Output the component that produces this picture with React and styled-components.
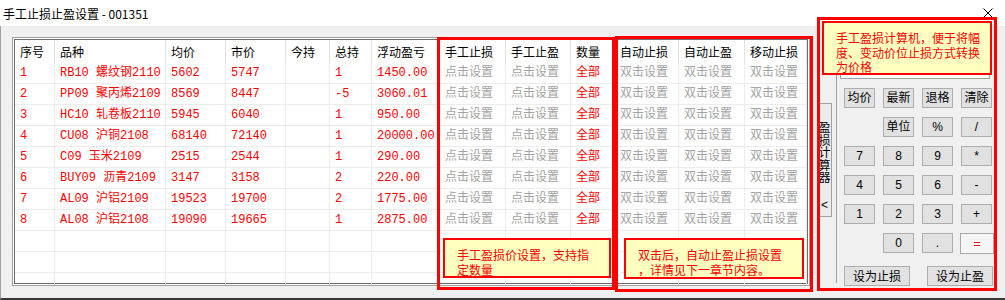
import React from 'react';
import styled, { createGlobalStyle } from 'styled-components';

const RED = '#ff0000';

const GlobalStyle = createGlobalStyle`
  html, body {
    margin: 0;
    padding: 0;
    background: #fff;
  }
  body {
    font-family: "Noto Sans CJK SC", "Noto Sans", sans-serif;
  }
`;

const columns = [
  { title: '序号', w: 40 },
  { title: '品种', w: 111 },
  { title: '均价', w: 60 },
  { title: '市价', w: 60 },
  { title: '今持', w: 44 },
  { title: '总持', w: 42 },
  { title: '浮动盈亏', w: 68 },
  { title: '手工止损', w: 66 },
  { title: '手工止盈', w: 65 },
  { title: '数量', w: 44 },
  { title: '自动止损', w: 64 },
  { title: '自动止盈', w: 66 },
  { title: '移动止损', w: 62 },
];

const positions = [
  ['1', 'RB10 螺纹钢2110', '5602', '5747', '', '1', '1450.00'],
  ['2', 'PP09 聚丙烯2109', '8569', '8447', '', '-5', '3060.01'],
  ['3', 'HC10 轧卷板2110', '5945', '6040', '', '1', '950.00'],
  ['4', 'CU08 沪铜2108', '68140', '72140', '', '1', '20000.00'],
  ['5', 'C09 玉米2109', '2515', '2544', '', '1', '290.00'],
  ['6', 'BUY09 沥青2109', '3147', '3158', '', '2', '220.00'],
  ['7', 'AL09 沪铝2109', '19523', '19700', '', '2', '1775.00'],
  ['8', 'AL08 沪铝2108', '19090', '19665', '', '1', '2875.00'],
];

const keys = [
  { label: '均价', col: 1 }, { label: '最新' }, { label: '退格' }, { label: '清除' },
  { label: '单位', col: 2 }, { label: '%' }, { label: '/' },
  { label: '7', col: 1 }, { label: '8' }, { label: '9' }, { label: '*' },
  { label: '4', col: 1 }, { label: '5' }, { label: '6' }, { label: '-' },
  { label: '1', col: 1 }, { label: '2' }, { label: '3' }, { label: '+' },
  { label: '0', col: 2 }, { label: '.' }, { label: '=', accent: true },
];

const template = columns.map((c) => c.w + 'px').join(' ');

const Window = styled.div`
  position: relative;
  width: 1005px;
  height: 300px;
  overflow: hidden;
  display: flex;
  flex-direction: column;
  background: #f0f0f0;
  font-family: "Noto Sans CJK SC", "Noto Sans", sans-serif;
`;

const TitleBar = styled.div`
  flex: none;
  height: 26px;
  display: flex;
  align-items: center;
  padding: 0 12px 0 3px;
  background: #fff;
  font-size: 12px;
  color: #000;
`;

const CloseIcon = styled.svg`
  margin-left: auto;
  display: block;
`;

const Body = styled.div`
  flex: 1;
  display: flex;
  align-items: flex-start;
  border-left: 1px solid #a0a0a0;
  border-bottom: 2px solid #3a3a3a;
  background: #f0f0f0;
`;

const GridFrame = styled.div`
  flex: none;
  margin: 11px 0 0 11px;
  width: 798px;
  height: 249px;
  box-sizing: border-box;
  padding: 2px;
  border: 1px solid #a0a0a0;
  box-shadow: inset 0 0 0 1px #fff, inset 0 0 0 2px #6d6d6d;
  background: #fff;
  overflow: hidden;
`;

const GridRow = styled.div`
  display: grid;
  grid-template-columns: ${template};
  height: ${(p) => (p.$head ? 23 : 21)}px;
`;

const HeadCell = styled.div`
  box-sizing: border-box;
  padding-left: 5px;
  border-right: 1px solid #e2e2e2;
  line-height: 23px;
  font-size: 12px;
  color: #000;
  white-space: nowrap;
  overflow: hidden;
`;

const toneColor = { red: RED, gray: '#a3a3a3', black: '#000' };

const Cell = styled.div`
  box-sizing: border-box;
  padding-left: 5px;
  border-right: 1px solid #ececec;
  border-bottom: 1px solid #ececec;
  line-height: 21px;
  font-family: "Liberation Mono", "Noto Sans CJK SC", monospace;
  font-size: 12px;
  color: ${(p) => toneColor[p.$tone] || '#000'};
  white-space: nowrap;
  overflow: hidden;
`;

const CalcPanel = styled.div`
  flex: none;
  margin-left: 7px;
  display: flex;
  align-items: flex-start;
`;

const SideTab = styled.div`
  margin-top: 77px;
  width: 15px;
  height: 114px;
  box-sizing: border-box;
  border: 1px solid #a0a0a0;
  background: #ebebeb;
  display: flex;
  flex-direction: column;
  align-items: center;
  padding-top: 17px;
  font-size: 12px;
  color: #000;
`;

const TabChar = styled.span`
  display: block;
  width: 12px;
  line-height: 12.5px;
  text-align: center;
`;

const TabArrow = styled.span`
  display: block;
  margin-top: 15px;
  font-family: "Liberation Sans", sans-serif;
  line-height: 12px;
`;

const Divider = styled.div`
  margin-left: 4px;
  width: 1px;
  height: 257px;
  background: #a0a0a0;
`;

const KeyPad = styled.div`
  margin-left: 3px;
  width: 154px;
  display: flex;
  flex-direction: column;
`;

const Display = styled.div`
  margin-top: 30px;
  width: 150px;
  height: 23px;
  box-sizing: border-box;
  border: 1px solid #a0a0a0;
  background: #fff;
`;

const KeyGrid = styled.div`
  margin: 9px 0 0 4px;
  display: grid;
  grid-template-columns: repeat(4, 31px);
  grid-auto-rows: 20px;
  column-gap: 8px;
  row-gap: 9px;
`;

const Key = styled.button`
  grid-column-start: ${(p) => p.$col || 'auto'};
  box-sizing: border-box;
  margin: ${(p) => (p.$accent ? '0 -2px 0 -1px' : '0')};
  height: ${(p) => (p.$accent ? 21 : 20)}px;
  padding: 0;
  border: 1px solid ${(p) => (p.$accent ? '#a8a8a8' : '#adadad')};
  background: ${(p) => (p.$accent ? '#f5f5f5' : '#e1e1e1')};
  color: ${(p) => (p.$accent ? RED : '#000')};
  font-family: "Liberation Sans", "Noto Sans CJK SC", sans-serif;
  font-size: 12px;
  line-height: 18px;
`;

const ActionRow = styled.div`
  margin: 13px 0 0 4px;
  display: flex;
  gap: 17px;
`;

const ActionButton = styled.button`
  width: 66px;
  height: 20px;
  box-sizing: border-box;
  padding: 0;
  border: 1px solid #adadad;
  background: #e1e1e1;
  color: #000;
  font-family: "Noto Sans CJK SC", sans-serif;
  font-size: 12px;
  line-height: 18px;
`;

const Annotation = styled.div`
  position: absolute;
  left: ${(p) => p.$x}px;
  top: ${(p) => p.$y}px;
  width: ${(p) => p.$w}px;
  height: ${(p) => p.$h}px;
  box-sizing: border-box;
  border: 3px solid ${RED};
  pointer-events: none;
`;

const Tip = styled.div`
  position: absolute;
  left: ${(p) => p.$x}px;
  top: ${(p) => p.$y}px;
  width: ${(p) => p.$w}px;
  height: ${(p) => p.$h}px;
  box-sizing: border-box;
  padding: 8px 0 0 12px;
  border: 2px solid ${RED};
  background: #ffffc0;
  color: ${RED};
  font-size: 12px;
  line-height: 14.5px;
`;

const TipLine = styled.div`
  white-space: nowrap;
`;

function cellTone(i) {
  if (i === 7 || i === 8 || i >= 10) return 'gray';
  return 'red';
}

function PositionRow({ data }) {
  const cells = data
    ? [...data, '点击设置', '点击设置', '全部', '双击设置', '双击设置', '双击设置']
    : columns.map(() => '');
  return (
    <GridRow>
      {cells.map((text, i) => (
        <Cell key={i} $tone={cellTone(i)}>{text}</Cell>
      ))}
    </GridRow>
  );
}

function Note({ x, y, w, h, lines }) {
  return (
    <Tip $x={x} $y={y} $w={w} $h={h}>
      {lines.map((l) => <TipLine key={l}>{l}</TipLine>)}
    </Tip>
  );
}

export default function App() {
  return (
    <>
      <GlobalStyle />
      <Window>
        <TitleBar>
          <span>手工止损止盈设置 - 001351</span>
          <CloseIcon width="10" height="10" viewBox="0 0 10 10">
            <path d="M0.5 0.5 L9.5 9.5 M9.5 0.5 L0.5 9.5" stroke="#000" strokeWidth="1" />
          </CloseIcon>
        </TitleBar>
        <Body>
          <GridFrame>
            <GridRow $head>
              {columns.map((c) => <HeadCell key={c.title}>{c.title}</HeadCell>)}
            </GridRow>
            {positions.map((p) => <PositionRow key={p[0]} data={p} />)}
            <PositionRow />
            <PositionRow />
            <PositionRow />
          </GridFrame>
          <CalcPanel>
            <SideTab>
              {'盈损计算器'.split('').map((ch) => <TabChar key={ch}>{ch}</TabChar>)}
              <TabArrow>&lt;</TabArrow>
            </SideTab>
            <Divider />
            <KeyPad>
              <Display />
              <KeyGrid>
                {keys.map((k) => (
                  <Key key={k.label} $col={k.col} $accent={k.accent}>{k.label}</Key>
                ))}
              </KeyGrid>
              <ActionRow>
                <ActionButton>设为止损</ActionButton>
                <ActionButton>设为止盈</ActionButton>
              </ActionRow>
            </KeyPad>
          </CalcPanel>
        </Body>

        <Annotation $x={437} $y={37} $w={178} $h={253} />
        <Annotation $x={615} $y={36} $w={198} $h={256} />
        <Annotation $x={817} $y={17} $w={180} $h={274} />
        <Note x={443} y={238} w={168} h={40} lines={['手工盈损价设置，支持指', '定数量']} />
        <Note x={624} y={238} w={180} h={41} lines={['双击后，自动止盈止损设置', '，详情见下一章节内容。']} />
        <Note
          x={822}
          y={21}
          w={170}
          h={54}
          lines={['手工盈损计算机，便于将幅', '度、变动价位止损方式转换', '为价格']}
        />
      </Window>
    </>
  );
}
